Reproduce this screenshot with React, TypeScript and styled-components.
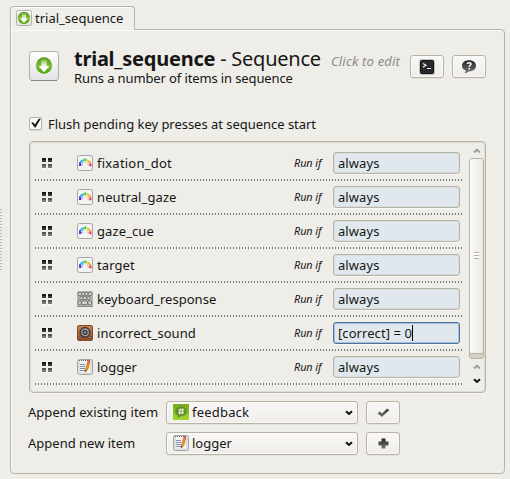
import React from 'react';
import styled, { createGlobalStyle, css } from 'styled-components';

const line = '#b7b4a3';

const GlobalStyle = createGlobalStyle`
  * { box-sizing: border-box; }
  body { margin: 0; background: #eeede8; }
`;

const Page = styled.div`
  width: 510px;
  height: 479px;
  overflow: hidden;
  display: grid;
  grid-template-columns: 10px 495px;
  background: #eeede8;
  color: #161616;
  font: 13px/18px 'Noto Sans', sans-serif;
  white-space: nowrap;
`;

const Splitter = styled.div`
  width: 2px;
  height: 61px;
  margin-top: 209px;
  background: repeating-linear-gradient(#b9b7ab 0 1px, transparent 1px 3px);
`;

const Main = styled.div`
  padding-top: 6px;
`;

const Tab = styled.div`
  position: relative;
  z-index: 1;
  display: flex;
  align-items: center;
  gap: 3px;
  width: 125px;
  height: 24px;
  padding-left: 5px;
  background: #efeee9;
  border: 1px solid ${line};
  border-bottom: 0;
  border-radius: 4px 4px 0 0;
  box-shadow: inset 1px 1px #fbfbf9;
  > span { margin-bottom: 2px; }
  > svg { margin-bottom: 1px; }
`;

const Panel = styled.div`
  width: 495px;
  height: 445px;
  margin-top: -1px;
  padding: 21px 18px 0;
  border: 1px solid ${line};
  border-radius: 0 4px 4px 4px;
  box-shadow: inset 1px 1px #fbfbf9;
`;

const Text = styled.span<{ $track?: number }>`
  letter-spacing: ${p => p.$track ?? 0}px;
`;

const Header = styled.div`
  display: flex;
  height: 40px;
`;

const HeaderText = styled.div`
  width: 257px;
  margin-left: 15px;
  margin-top: -4px;
`;

const Title = styled.div`
  font-size: 20px;
  line-height: 24px;
  height: 22px;
  b { letter-spacing: -0.24px; }
`;

const Hint = styled.div`
  width: 79px;
  margin-top: 1px;
  color: #8b8b89;
  font-style: italic;
`;

const Button = styled.button`
  display: flex;
  align-items: center;
  justify-content: center;
  width: 34px;
  height: 23px;
  padding: 0;
  border: 1px solid ${line};
  border-radius: 3px;
  background: linear-gradient(#f9f8f6, #eeede9);
  box-shadow: 0 1px #e3e2dc, inset 0 0 0 1px #faf9f7;
`;

const HeaderButtons = styled.div`
  display: flex;
  gap: 8px;
  margin-top: 4px;
`;

const CheckRow = styled.div`
  display: flex;
  align-items: center;
  gap: 6px;
  height: 20px;
  margin-top: 24px;
  > span { margin-bottom: 2px; }
`;

const CheckBox = styled.div`
  width: 13px;
  height: 13px;
  margin-bottom: 3px;
  border: 1px solid ${line};
  border-radius: 2px;
  background: #f8f8f6;
  box-shadow: 0 1px 1px #d8d7d0;
  svg { display: block; margin: -1px; }
`;

const ListFrame = styled.div`
  display: flex;
  justify-content: space-between;
  width: 457px;
  height: 252px;
  margin-top: 6px;
  padding-left: 5px;
  border: 1px solid ${line};
  border-radius: 4px;
  box-shadow: inset 0 0 0 1px #dddcd4, 0 1px #faf9f7;
`;

const Items = styled.div`
  width: 428px;
  padding-top: 5px;
`;

const Item = styled.div`
  display: grid;
  grid-template-columns: 42px 20px 197px 39px 127px;
  align-items: center;
  height: 34px;
  padding-bottom: 2px;
  background: repeating-linear-gradient(90deg, #77756f 0 1px, transparent 1px 3px) bottom / 100% 2px no-repeat;
  > svg:first-child { margin-left: 7px; }
`;

const RunIf = styled.span`
  font-size: 10.8px;
  font-style: italic;
  letter-spacing: -0.05px;
`;

const Field = styled.div<{ $focused?: boolean }>`
  display: flex;
  align-items: center;
  height: 22px;
  padding: 0 4px;
  background: #e0e8ee;
  border: 1px solid ${line};
  border-radius: 3px;
  box-shadow: inset 0 0 0 1px #d7dee1, 0 1px #faf9f7;
  ${p => p.$focused && css`
    border-color: #4a749f;
    box-shadow: inset 0 0 0 1px #a5bfd8, 0 1px #faf9f7;
  `}
`;

const Caret = styled.i`
  width: 1px;
  height: 16px;
  background: #000;
`;

const ScrollBar = styled.div`
  display: flex;
  flex-direction: column;
  align-items: center;
  width: 15px;
  margin-right: 1px;
  padding-top: 6px;
`;

const ScrollTrack = styled.div`
  width: 15px;
  height: 204px;
  margin: 4px 0 5px;
  border: 1px solid ${line};
  border-radius: 3px;
  background: #d6d2c9;
`;

const ScrollThumb = styled.div`
  display: flex;
  align-items: center;
  justify-content: center;
  height: 195px;
  border-bottom: 1px solid ${line};
  border-radius: 2px;
  background: linear-gradient(90deg, #fbfaf8, #eae8e4);
`;

const Grip = styled.div`
  width: 5px;
  height: 7px;
  background: repeating-linear-gradient(#b5b3a8 0 1px, #fbfaf8 1px 3px);
`;

const AppendRow = styled.div`
  display: grid;
  grid-template-columns: 138px 192px 34px;
  align-items: center;
  height: 23px;
  margin: 8px 0 0 -1px;
  > button { margin-left: 8px; }
  > span { margin-bottom: 2px; }
`;

const Combo = styled.div`
  display: flex;
  align-items: center;
  width: 192px;
  height: 23px;
  padding: 0 4px 0 6px;
  border: 1px solid ${line};
  border-radius: 3px;
  background: linear-gradient(#f9f8f6, #eeede9);
  box-shadow: 0 1px #e3e2dc, inset 0 0 0 1px #faf9f7;
  > span { flex: 1; margin: 0 0 2px 3px; }
  > svg:first-child { margin-bottom: 1px; }
`;

const DownArrowIcon = ({ size = 16 }: { size?: number }) => {
  const big = size > 16;
  return (
    <svg width={size} height={size} viewBox={`0 0 ${size} ${size}`}>
      <defs>
        <linearGradient id="tile" x2="0" y2="1"><stop stopColor="#fff" /><stop offset="1" stopColor="#e2e2e4" /></linearGradient>
        <linearGradient id="green" x2="0" y2="1"><stop stopColor="#4d9c13" /><stop offset=".55" stopColor="#86bd3c" /><stop offset="1" stopColor="#4d9e0d" /></linearGradient>
        <linearGradient id="fade" x2="0" y2="1"><stop stopColor="#fff" stopOpacity=".25" /><stop offset=".6" stopColor="#fff" /></linearGradient>
      </defs>
      <rect x=".5" y=".5" width={size - 1} height={size - 1} rx={big ? 3 : 2} fill="url(#tile)" stroke="#b0b0ac" />
      {big && <path d="M2 29.5h26" stroke="#85858a" />}
      <g transform={big ? 'translate(6.5 6)' : 'translate(1.5 1.5) scale(.76)'}>
        <circle cx="8.5" cy="8.5" r="8.2" fill="url(#green)" />
        <path d="M5.8 2.5h5.4V9h2.6l-5.3 6.2L3.2 9h2.6z" fill="url(#fade)" />
      </g>
    </svg>
  );
};

const HandleIcon = () => (
  <svg width="10" height="11" viewBox="0 0 10 11">
    <path d="M0 0h4v2H0zM6 0h4v2H6z" fill="#171717" />
    <path d="M0 2h4v2H0zM6 2h4v2H6z" fill="#3a3a39" />
    <path d="M0 6h4v2H0zM6 6h4v2H6z" fill="#555" />
    <path d="M0 8h4v2H0zM6 8h4v2H6z" fill="#7a7a78" />
    <path d="M0 10.5h4M6 10.5h4" stroke="#fafaf8" />
  </svg>
);

const rainbow: [number, number, string][] = [
  [2, 9, '#5a1fb0'], [2, 7, '#3a55e0'], [3.5, 5.2, '#1f9be8'], [5.4, 4.2, '#25c5c0'], [7.2, 3.6, '#4fc920'],
  [9.2, 4.4, '#d8cf1b'], [11, 5.5, '#f6a92c'], [12.2, 7.3, '#f67b38'], [12.4, 9.2, '#ed224b'],
];
const innerDots: [number, number, string][] = [
  [4.4, 9, '#a05ad8'], [4.8, 7.3, '#5fa0f0'], [6.5, 6.4, '#5fd8b0'], [8.4, 6.4, '#a9df4d'], [10, 7.4, '#ffb564'], [10.6, 9, '#f97a88'],
];

const SketchIcon = () => (
  <svg width="16" height="16" viewBox="0 0 16 16">
    <rect x=".5" y=".5" width="15" height="15" rx="2" fill="#f3f3f4" stroke="#a5a6a8" />
    {rainbow.map(([x, y, fill]) => <rect key={`${x}-${y}`} x={x} y={y} width="2.1" height="2.1" rx=".4" fill={fill} />)}
    {innerDots.map(([x, y, fill]) => <rect key={`${x}-${y}`} x={x} y={y} width="1.2" height="1.2" rx=".3" fill={fill} />)}
  </svg>
);

const KeyboardIcon = () => (
  <svg width="16" height="16" viewBox="0 0 16 16">
    <rect width="16" height="16" rx="2" fill="#b1b1af" />
    <path d="M0 15.5h16" stroke="#8a8a88" />
    <g fill="#d3d3d1" stroke="#6f6f6e" strokeWidth=".9">
      <rect x="1" y="1.5" width="3.4" height="3" rx=".7" /><rect x="4.7" y="1.5" width="3" height="3" rx=".7" /><rect x="8" y="1.5" width="3" height="3" rx=".7" /><rect x="11.4" y="1.5" width="3.2" height="3" rx=".7" />
      <rect x="3" y="5.5" width="3" height="3" rx=".7" /><rect x="6.5" y="5.5" width="3" height="3" rx=".7" /><rect x="10" y="5.5" width="3" height="3" rx=".7" />
      <rect x="1.2" y="10" width="3" height="3.5" rx=".7" /><rect x="4.6" y="10" width="6" height="3.5" rx=".7" /><rect x="11" y="10" width="3.5" height="3.5" rx=".7" />
    </g>
  </svg>
);

const SpeakerIcon = () => (
  <svg width="16" height="16" viewBox="0 0 16 16">
    <defs><linearGradient id="wood" x2="0" y2="1"><stop stopColor="#c78850" /><stop offset="1" stopColor="#95481c" /></linearGradient></defs>
    <rect x=".5" y=".5" width="15" height="15" rx="1.5" fill="url(#wood)" stroke="#85492b" />
    <circle cx="8" cy="7.4" r="5" fill="#4b4b4d" stroke="#373231" />
    <circle cx="8" cy="7.4" r="3.2" fill="#333" stroke="#aaa" strokeWidth="1.2" />
    <circle cx="8" cy="7.4" r="1.4" fill="#858585" />
    <circle cx="3" cy="12.7" r="1.2" fill="#c6b4a8" stroke="#41352f" strokeWidth=".8" /><circle cx="13" cy="12.7" r="1.2" fill="#c6b4a8" stroke="#41352f" strokeWidth=".8" />
  </svg>
);

const LoggerIcon = () => (
  <svg width="16" height="16" viewBox="0 0 16 16">
    <rect x=".5" y=".5" width="15" height="15" rx="2" fill="#dededf" stroke="#a4a4a6" />
    <path d="M3 1.4h10v12H3z" fill="#f4f4f5" />
    <path d="M2 1.5h12" stroke="#656565" strokeDasharray="1 1" />
    <path d="M3 5.5h5M3 7.5h5M3 9.5h5M3 11.5h5" stroke="#7d8cb0" />
    <path d="M8 13l.5-3 2-6.7 2.2.7-2 6.8z" fill="#f39819" stroke="#bd6312" strokeWidth=".6" />
    <path d="m10.5 3.3.5-2.5 2.2.6-.5 2.6z" fill="#de5756" />
    <path d="m8.1 13 .3-2 1.2.5z" fill="#373022" />
  </svg>
);

const FeedbackIcon = () => (
  <svg width="16" height="16" viewBox="0 0 16 16">
    <defs><linearGradient id="lime" x2="0" y2="1"><stop stopColor="#76a91f" /><stop offset="1" stopColor="#a1da28" /></linearGradient></defs>
    <rect width="16" height="16" fill="url(#lime)" />
    <path d="M8 2.2c3.7 0 6 2.2 6 5s-2.6 5-6 5l-3.7 2 .7-2.4C3.2 11 2 9.4 2 7.2c0-2.8 2.3-5 6-5z" fill="#628e2a" stroke="#83b33a" strokeWidth=".6" />
    <path d="M7.2 4.4l-.6 6M9.8 4.4l-.6 6M5.4 6h5.7M5.2 8.8h5.7" stroke="#fff" strokeWidth=".9" />
  </svg>
);

const TerminalIcon = () => (
  <svg width="16" height="16" viewBox="0 0 16 16">
    <rect x=".5" y=".5" width="15" height="15" rx="2" fill="#d4d3d0" stroke="#c2c1bd" />
    <rect x="1.5" y="1.5" width="13" height="13" rx="1" fill="#29292d" stroke="#151516" />
    <path d="m4 4.5 3 1.8L4 8.2M8 9.5h4" fill="none" stroke="#f6f6f6" strokeWidth="1.2" />
  </svg>
);

const HelpIcon = () => (
  <svg width="16" height="16" viewBox="0 0 16 16">
    <defs><linearGradient id="bubble" x2="0" y2="1"><stop stopColor="#222" /><stop offset="1" stopColor="#777" /></linearGradient></defs>
    <path d="M8 1.2c4.2 0 7 2.2 7 5.5s-2.8 5.5-7 5.5c-1.1 1.2-2.6 1.9-4.7 2 .9-.8 1.5-1.6 1.5-2.6C2.4 10.7 1 9.1 1 6.7c0-3.3 2.8-5.5 7-5.5z" fill="url(#bubble)" />
    <path d="M6.2 4.9C6.4 3.3 10 3.2 10 5.1c0 1.2-1.8 1.2-1.8 2.8M8.2 8.9v1.7" fill="none" stroke="#fff" strokeWidth="1.5" />
  </svg>
);

const CheckIcon = () => (
  <svg width="13" height="10" viewBox="0 0 13 10">
    <defs><linearGradient id="tick" x2="0" y2="1"><stop stopColor="#383838" /><stop offset="1" stopColor="#777" /></linearGradient></defs>
    <path d="m.7 5.4 2-2 2.2 2L10.2.5l2 1.8-7.3 6.8z" fill="url(#tick)" />
  </svg>
);

const PlusIcon = () => (
  <svg width="11" height="11" viewBox="0 0 11 11">
    <defs><linearGradient id="plus" x2="0" y2="1"><stop stopColor="#222" /><stop offset="1" stopColor="#777" /></linearGradient></defs>
    <path d="M3.5.5h4v3h3v4h-3v3h-4v-3h-3v-4h3z" fill="url(#plus)" />
  </svg>
);

const Chevron = ({ up, color = '#111' }: { up?: boolean; color?: string }) => (
  <svg width="8" height="6" viewBox="0 0 8 6">
    <path d={up ? 'M1 4.5 4 1.7l3 2.8' : 'm1 1.2 3 2.8 3-2.8'} fill="none" stroke={color} strokeWidth="2" />
  </svg>
);

const ArrowSlot = styled.div<{ $h: number }>`
  display: flex;
  align-items: center;
  height: ${p => p.$h}px;
`;

const items: { name: string; icon: React.ReactNode; track: number; value: string; focused?: boolean }[] = [
  { name: 'fixation_dot', icon: <SketchIcon />, track: 0.22, value: 'always' },
  { name: 'neutral_gaze', icon: <SketchIcon />, track: 0.1, value: 'always' },
  { name: 'gaze_cue', icon: <SketchIcon />, track: 0.1, value: 'always' },
  { name: 'target', icon: <SketchIcon />, track: 0.1, value: 'always' },
  { name: 'keyboard_response', icon: <KeyboardIcon />, track: 0.03, value: 'always' },
  { name: 'incorrect_sound', icon: <SpeakerIcon />, track: 0.04, value: '[correct] = 0', focused: true },
  { name: 'logger', icon: <LoggerIcon />, track: 0, value: 'always' },
];

export default function App() {
  return (
    <>
      <GlobalStyle />
      <Page>
        <Splitter />
        <Main>
          <Tab><DownArrowIcon /><Text>trial_sequence</Text></Tab>
          <Panel>
            <Header>
              <DownArrowIcon size={30} />
              <HeaderText>
                <Title><b>trial_sequence</b><Text $track={-0.25}> - Sequence</Text></Title>
                <Text $track={-0.12}>Runs a number of items in sequence</Text>
              </HeaderText>
              <Hint><Text $track={0.18}>Click to edit</Text></Hint>
              <HeaderButtons>
                <Button aria-label="View script"><TerminalIcon /></Button>
                <Button aria-label="Help"><HelpIcon /></Button>
              </HeaderButtons>
            </Header>
            <CheckRow>
              <CheckBox>
                <svg width="13" height="13" viewBox="0 0 13 13"><path d="m2.2 5.8 1.9-.6 1.7 2.2 4-5.6h2L6.2 11z" fill="#161616" /></svg>
              </CheckBox>
              <Text $track={-0.03}>Flush pending key presses at sequence start</Text>
            </CheckRow>
            <ListFrame>
              <Items>
                {items.map(item => (
                  <Item key={item.name}>
                    <HandleIcon />
                    {item.icon}
                    <Text $track={item.track}>{item.name}</Text>
                    <RunIf>Run if</RunIf>
                    <Field $focused={item.focused}>
                      <Text $track={0.07}>{item.value}</Text>
                      {item.focused && <Caret />}
                    </Field>
                  </Item>
                ))}
              </Items>
              <ScrollBar>
                <Chevron up color="#a2a09a" />
                <ScrollTrack><ScrollThumb><Grip /></ScrollThumb></ScrollTrack>
                <ArrowSlot $h={6}><Chevron up color="#a2a09a" /></ArrowSlot>
                <ArrowSlot $h={22}><Chevron /></ArrowSlot>
              </ScrollBar>
            </ListFrame>
            <AppendRow>
              <Text $track={0.03}>Append existing item</Text>
              <Combo><FeedbackIcon /><Text $track={0.2}>feedback</Text><Chevron /></Combo>
              <Button aria-label="Append existing item"><CheckIcon /></Button>
            </AppendRow>
            <AppendRow>
              <Text>Append new item</Text>
              <Combo><LoggerIcon /><Text>logger</Text><Chevron /></Combo>
              <Button aria-label="Append new item"><PlusIcon /></Button>
            </AppendRow>
          </Panel>
        </Main>
      </Page>
    </>
  );
}
